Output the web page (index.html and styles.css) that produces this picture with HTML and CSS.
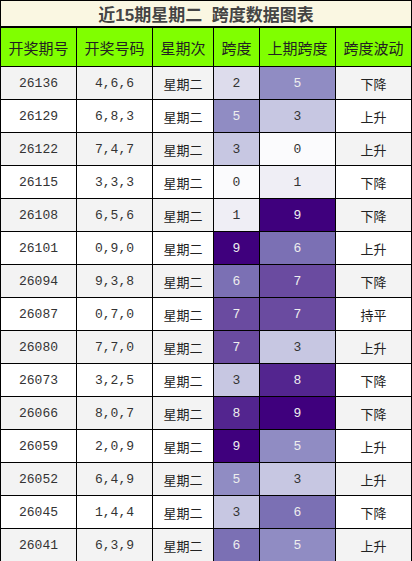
FILE: index.html
```html
<!DOCTYPE html>
<html lang="zh-CN">
<head>
    <meta charset="UTF-8">
    <meta name="viewport" content="width=device-width, initial-scale=1.0">
    <title>跨度数据图表</title>
    <link rel="stylesheet" href="styles.css">
</head>
<body>
    <table class="span-table">
        <colgroup>
            <col class="c1"><col class="c2"><col class="c3"><col class="c4"><col class="c5"><col class="c6">
        </colgroup>
        <thead>
            <tr class="title-row"><th colspan="6">近15期星期二&nbsp;&nbsp;跨度数据图表</th></tr>
            <tr class="head-row">
                <th>开奖期号</th><th>开奖号码</th><th>星期次</th><th>跨度</th><th>上期跨度</th><th>跨度波动</th>
            </tr>
        </thead>
        <tbody>
            <tr><td class="num">26136</td><td class="num">4,6,6</td><td>星期二</td><td class="num v2">2</td><td class="num v5">5</td><td>下降</td></tr>
            <tr><td class="num">26129</td><td class="num">6,8,3</td><td>星期二</td><td class="num v5">5</td><td class="num v3">3</td><td>上升</td></tr>
            <tr><td class="num">26122</td><td class="num">7,4,7</td><td>星期二</td><td class="num v3">3</td><td class="num v0">0</td><td>上升</td></tr>
            <tr><td class="num">26115</td><td class="num">3,3,3</td><td>星期二</td><td class="num v0">0</td><td class="num v1">1</td><td>下降</td></tr>
            <tr><td class="num">26108</td><td class="num">6,5,6</td><td>星期二</td><td class="num v1">1</td><td class="num v9">9</td><td>下降</td></tr>
            <tr><td class="num">26101</td><td class="num">0,9,0</td><td>星期二</td><td class="num v9">9</td><td class="num v6">6</td><td>上升</td></tr>
            <tr><td class="num">26094</td><td class="num">9,3,8</td><td>星期二</td><td class="num v6">6</td><td class="num v7">7</td><td>下降</td></tr>
            <tr><td class="num">26087</td><td class="num">0,7,0</td><td>星期二</td><td class="num v7">7</td><td class="num v7">7</td><td>持平</td></tr>
            <tr><td class="num">26080</td><td class="num">7,7,0</td><td>星期二</td><td class="num v7">7</td><td class="num v3">3</td><td>上升</td></tr>
            <tr><td class="num">26073</td><td class="num">3,2,5</td><td>星期二</td><td class="num v3">3</td><td class="num v8">8</td><td>下降</td></tr>
            <tr><td class="num">26066</td><td class="num">8,0,7</td><td>星期二</td><td class="num v8">8</td><td class="num v9">9</td><td>下降</td></tr>
            <tr><td class="num">26059</td><td class="num">2,0,9</td><td>星期二</td><td class="num v9">9</td><td class="num v5">5</td><td>上升</td></tr>
            <tr><td class="num">26052</td><td class="num">6,4,9</td><td>星期二</td><td class="num v5">5</td><td class="num v3">3</td><td>上升</td></tr>
            <tr><td class="num">26045</td><td class="num">1,4,4</td><td>星期二</td><td class="num v3">3</td><td class="num v6">6</td><td>下降</td></tr>
            <tr><td class="num">26041</td><td class="num">6,3,9</td><td>星期二</td><td class="num v6">6</td><td class="num v5">5</td><td>上升</td></tr>
        </tbody>
    </table>
</body>
</html>
```
FILE: styles.css
```css
body {
    margin: 0;
    font-family: "Liberation Sans", "Noto Sans CJK SC", sans-serif;
    background-color: #fff;
}
.span-table {
    border-collapse: collapse;
    table-layout: fixed;
    width: 411px;
    border: 1px solid #000;
}
.c1, .c2 { width: 76px; }
.c3 { width: 61px; }
.c4 { width: 46px; }
.c5 { width: 76px; }
.c6 { width: 76px; }
th, td {
    border: 1px solid #000;
    text-align: center;
    padding: 0;
}
.title-row th {
    height: 24px;
    background-color: #faf7e2;
    border-bottom: 2px solid #000;
    color: #444;
    font-size: 17px;
    font-weight: bold;
}
.head-row th {
    height: 38px;
    background-color: #80ff00;
    color: #222;
    font-size: 15px;
    font-weight: normal;
}
td {
    height: 32px;
    font-size: 13px;
    color: #222;
}
tbody tr:nth-child(odd) td {
    background-color: #f3f3f3;
}
tbody tr:nth-child(even) td {
    background-color: #fff;
}
td.num {
    font-family: "Liberation Mono", monospace;
    color: #333;
}
/* span colour scale */
tbody tr td.v0 { background-color: #fbfbfd; }
tbody tr td.v1 { background-color: #efeef5; }
tbody tr td.v2 { background-color: #dddcec; }
tbody tr td.v3 { background-color: #c7c7e2; }
tbody tr td.v5 { background-color: #908cc3; color: #eee; }
tbody tr td.v6 { background-color: #7b70b4; color: #eee; }
tbody tr td.v7 { background-color: #6a4ba0; color: #eee; }
tbody tr td.v8 { background-color: #53258f; color: #eee; }
tbody tr td.v9 { background-color: #3f007d; color: #eee; }
```
